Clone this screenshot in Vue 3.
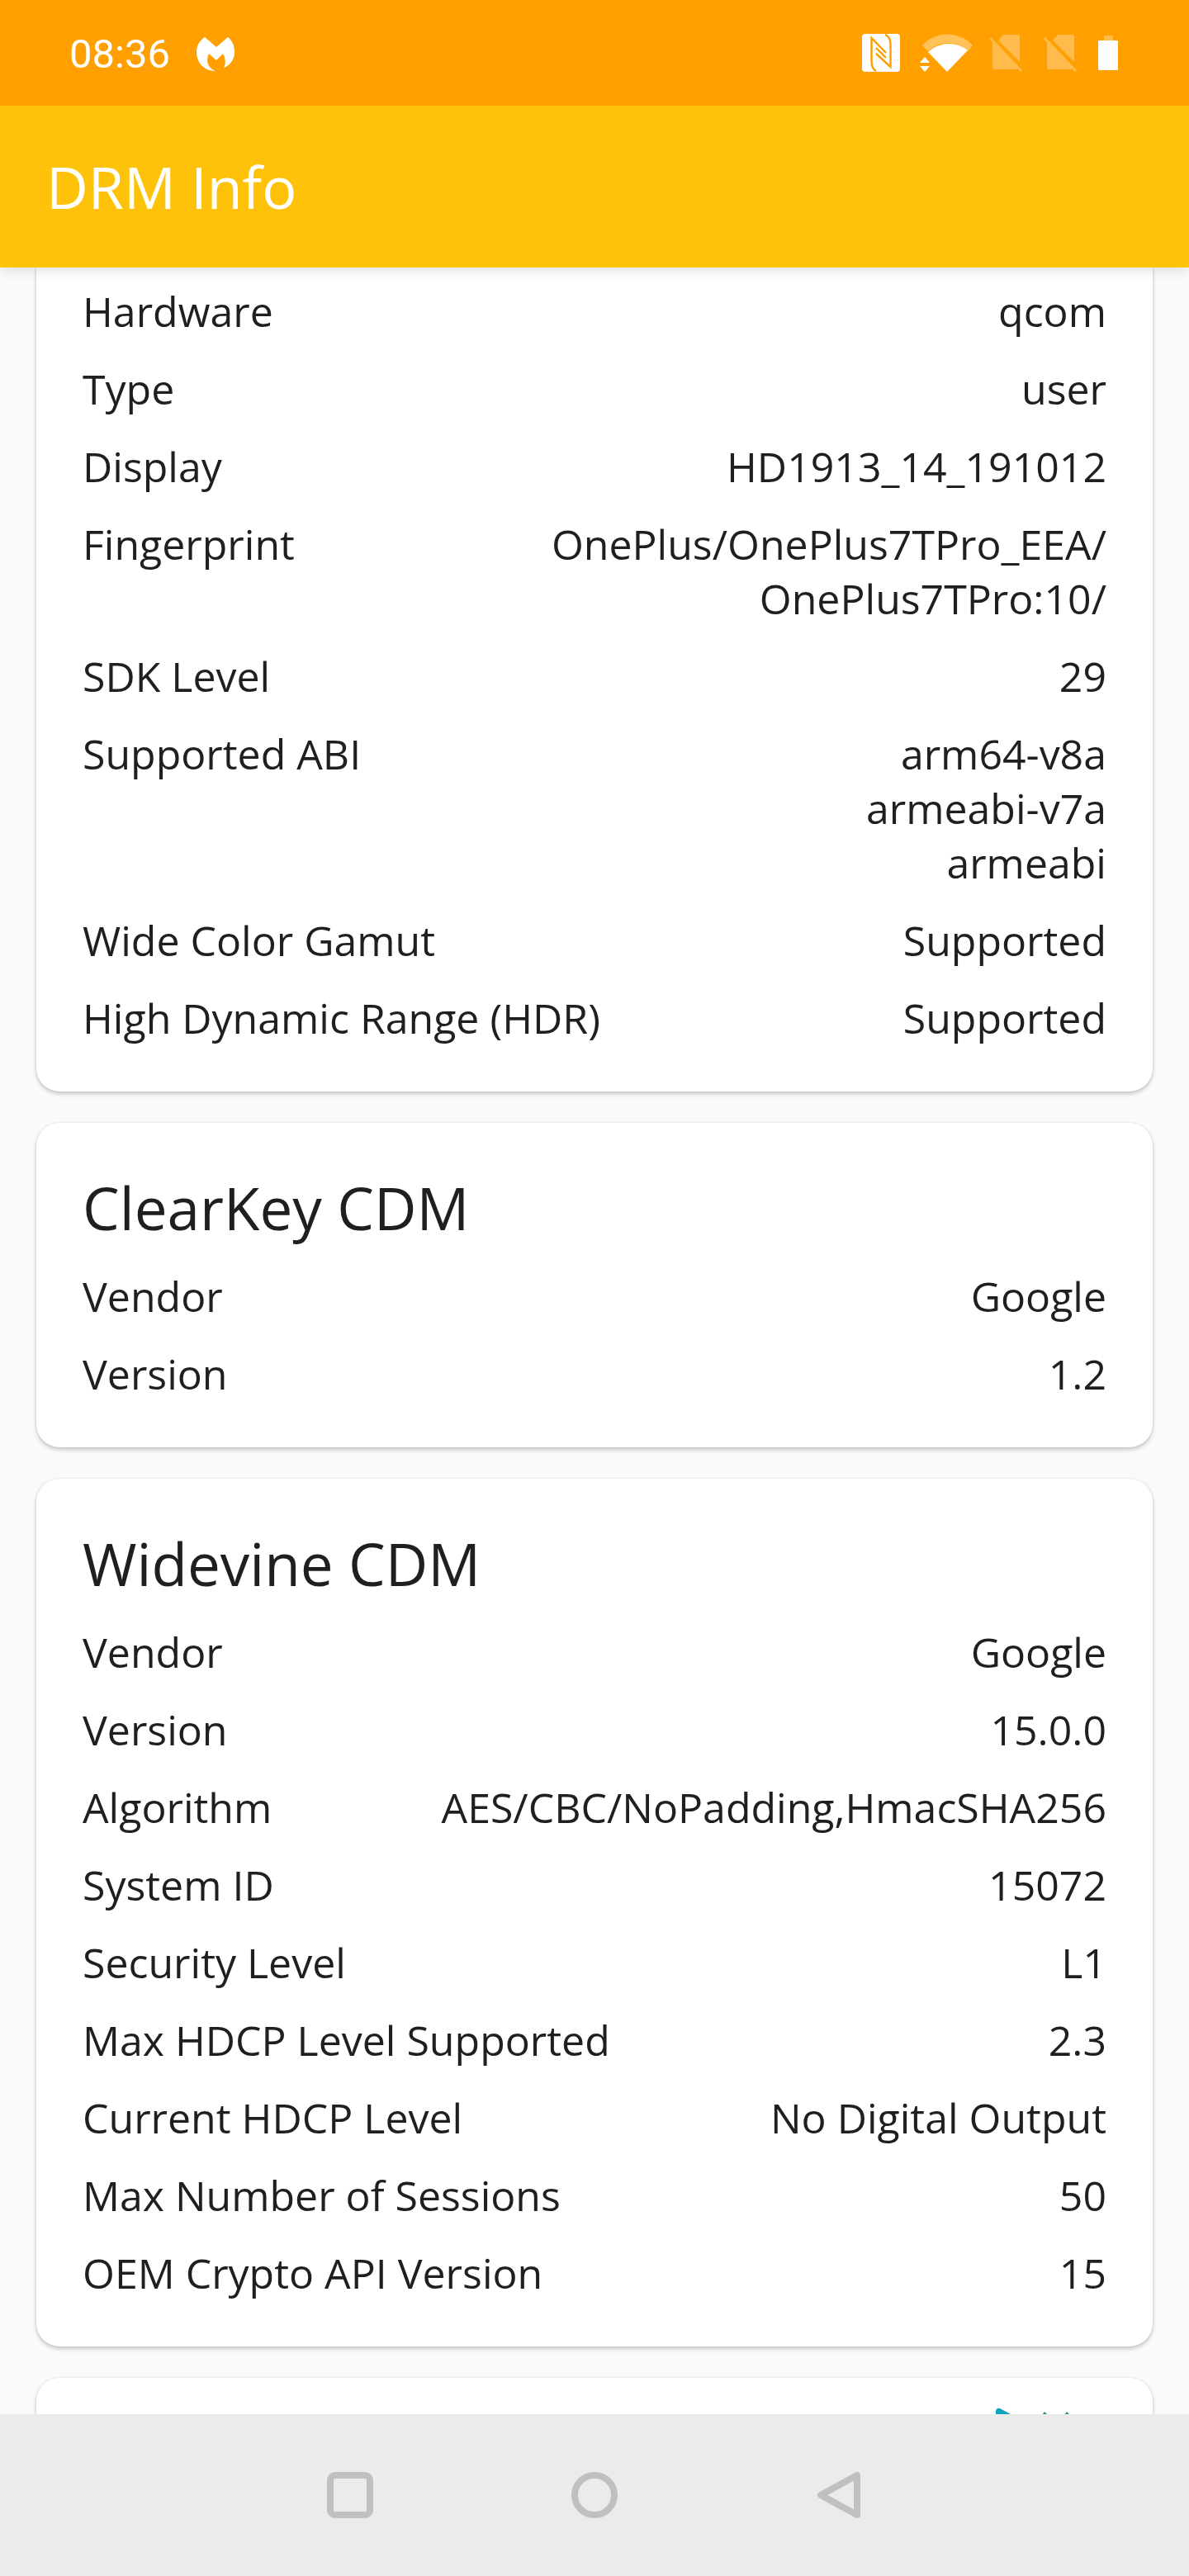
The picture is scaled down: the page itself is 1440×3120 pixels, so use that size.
<script setup>
const cards = [
  {
    title: '',
    rows: [
      ['Hardware', ['qcom']],
      ['Type', ['user']],
      ['Display', ['HD1913_14_191012']],
      ['Fingerprint', ['OnePlus/OnePlus7TPro_EEA/', 'OnePlus7TPro:10/']],
      ['SDK Level', ['29']],
      ['Supported ABI', ['arm64-v8a', 'armeabi-v7a', 'armeabi']],
      ['Wide Color Gamut', ['Supported']],
      ['High Dynamic Range (HDR)', ['Supported']],
    ],
  },
  {
    title: 'ClearKey CDM',
    rows: [
      ['Vendor', ['Google']],
      ['Version', ['1.2']],
    ],
  },
  {
    title: 'Widevine CDM',
    rows: [
      ['Vendor', ['Google']],
      ['Version', ['15.0.0']],
      ['Algorithm', ['AES/CBC/NoPadding,HmacSHA256']],
      ['System ID', ['15072']],
      ['Security Level', ['L1']],
      ['Max HDCP Level Supported', ['2.3']],
      ['Current HDCP Level', ['No Digital Output']],
      ['Max Number of Sessions', ['50']],
      ['OEM Crypto API Version', ['15']],
    ],
  },
]
</script>

<template>
  <div class="screen">
    <div class="status">
      <div class="status-left">
        <span class="clock">08:36</span>
        <svg width="46" height="42" viewBox="0 0 46 42" fill="#fff" aria-hidden="true">
          <path d="M10 0L24 12L38 0C43 4 46 10 46 18C46 27 41 34 33 37C36 32 35 25 32 20L24 28L15 20C11 28 13 37 23 41C9 41 0 31 0 18C0 10 4 4 10 0Z" />
        </svg>
      </div>
      <div class="status-right">
        <svg class="nfc" width="46" height="46" viewBox="0 0 46 46" aria-hidden="true">
          <rect width="46" height="46" rx="4" fill="#fff" />
          <g fill="none" stroke="#ffa000" stroke-width="2.4">
            <path d="M17 45C13 43 11.500 39 11.500 33V5L29 23" />
            <path d="M28 1C33 3 34.500 7 34.500 13V40L17 24" />
            <path d="M17 17L29 29" />
          </g>
        </svg>
        <svg class="wifi" width="64" height="46" viewBox="0 0 64 46" fill="#fff" aria-hidden="true">
          <path opacity=".35" d="M3 14C19 -4 48 -4 64 14L58 21C44 8 24 8 10 21Z" />
          <path d="M10 22C24 9 44 9 58 20L33 46Z" />
          <path d="M0 35L6 28L12 35ZM0 39H12L6 46Z" />
        </svg>
        <svg class="sim" width="40" height="46" viewBox="0 0 40 46" fill="#fff" aria-hidden="true">
          <g opacity=".3">
            <path d="M11 8L17 1H34Q37 1 37 4V34ZM4 10L35 42Q34 43 33 43H7Q4 43 4 40Z" />
            <path d="M2 4L0 6L38 46L40 44Z" />
          </g>
        </svg>
        <svg class="sim" width="40" height="46" viewBox="0 0 40 46" fill="#fff" aria-hidden="true">
          <g opacity=".3">
            <path d="M11 8L17 1H34Q37 1 37 4V34ZM4 10L35 42Q34 43 33 43H7Q4 43 4 40Z" />
            <path d="M2 4L0 6L38 46L40 44Z" />
          </g>
        </svg>
        <svg width="24" height="46" viewBox="0 0 24 46" fill="#fff" aria-hidden="true">
          <path opacity=".3" d="M7 2H18V8H7Z" />
          <rect y="8" width="24" height="36" rx="1" />
        </svg>
      </div>
    </div>

    <header class="appbar">
      <h1>DRM Info</h1>
    </header>

    <main class="list">
      <section v-for="(card, i) in cards" :key="i" class="card" :class="{ continued: !card.title }">
        <h2 v-if="card.title">{{ card.title }}</h2>
        <dl>
          <div v-for="[label, values] in card.rows" :key="label" class="row">
            <dt>{{ label }}</dt>
            <dd>
              <span v-for="value in values" :key="value">{{ value }}</span>
            </dd>
          </div>
        </dl>
      </section>
      <section class="card next">
        <svg width="92" height="56" viewBox="0 0 92 56" aria-hidden="true">
          <path d="M0 56V4Q1 0 5 1L18 8V56Z" fill="#12a3bd" />
          <path d="M59 5L63 9H56ZM86 5L90 9H83Z" fill="#2d8c7d" />
        </svg>
      </section>
    </main>

    <nav class="navbar">
      <button type="button" aria-label="Recent apps">
        <svg width="56" height="56" viewBox="0 0 56 56"><rect x="4" y="4" width="48" height="48" rx="6" /></svg>
      </button>
      <button type="button" aria-label="Home">
        <svg width="56" height="56" viewBox="0 0 56 56"><circle cx="28" cy="28" r="24" /></svg>
      </button>
      <button type="button" aria-label="Back">
        <svg width="56" height="56" viewBox="0 0 56 56"><path d="M50 4V52L6 28Z" /></svg>
      </button>
    </nav>
  </div>
</template>

<style>
body {
  margin: 0;
}
</style>

<style scoped>
.screen {
  display: flex;
  flex-direction: column;
  height: 100vh;
  background: #fafafa;
  color: #1f1f1f;
  font-family: "Open Sans", "Noto Sans", sans-serif;
}

.status {
  flex: none;
  position: relative;
  z-index: 2;
  display: flex;
  align-items: center;
  justify-content: space-between;
  height: 128px;
  padding: 0 86px 0 84px;
  background: #ffa000;
  color: #fff;
}

.status-left,
.status-right {
  display: flex;
  align-items: center;
}

.status-left {
  gap: 32px;
  padding-top: 4px;
}

.status-right {
  gap: 26px;
}

.nfc {
  margin-right: -2px;
}

.wifi {
  margin-right: -6px;
}

.clock {
  font-family: Roboto, sans-serif;
  font-size: 49px;
  line-height: 60px;
}

svg {
  display: block;
}

.appbar {
  flex: none;
  position: relative;
  z-index: 1;
  display: flex;
  align-items: center;
  height: 196px;
  padding: 0 56px;
  background: #ffc20a;
  color: #fff;
  box-shadow: 0 2px 16px rgba(0, 0, 0, 0.14);
}

h1,
h2 {
  margin: 0;
  font-weight: 400;
}

h1 {
  font-size: 70px;
  line-height: 94px;
}

h2 {
  margin-bottom: 28px;
  font-size: 71px;
  line-height: 93px;
}

.list {
  flex: 1;
  min-height: 0;
  overflow-y: auto;
  scrollbar-width: none;
  display: flex;
  flex-direction: column;
  gap: 38px;
  padding: 0 44px;
}

.card {
  flex: none;
  padding: 56px;
  border-radius: 28px;
  background: #fff;
  box-shadow: 0 3px 5px rgba(0, 0, 0, 0.2), 0 0 3px rgba(0, 0, 0, 0.1);
}

.continued {
  padding-top: 20px;
  border-radius: 0 0 28px 28px;
}

.next {
  display: flex;
  justify-content: flex-end;
  padding-top: 36px;
  padding-right: 98px;
}

dl {
  display: flex;
  flex-direction: column;
  gap: 28px;
  margin: 0;
}

.row {
  display: flex;
  justify-content: space-between;
  gap: 28px;
  font-size: 50px;
  line-height: 66px;
}

dd {
  display: flex;
  flex-direction: column;
  margin: 0;
  text-align: right;
}

.navbar {
  flex: none;
  display: flex;
  align-items: center;
  justify-content: center;
  gap: 240px;
  height: 196px;
  background: #ebebeb;
}

.navbar button {
  padding: 0;
  border: 0;
  background: none;
}

.navbar svg {
  fill: none;
  stroke: #c0c0c0;
  stroke-width: 8;
  stroke-linejoin: round;
}
</style>
